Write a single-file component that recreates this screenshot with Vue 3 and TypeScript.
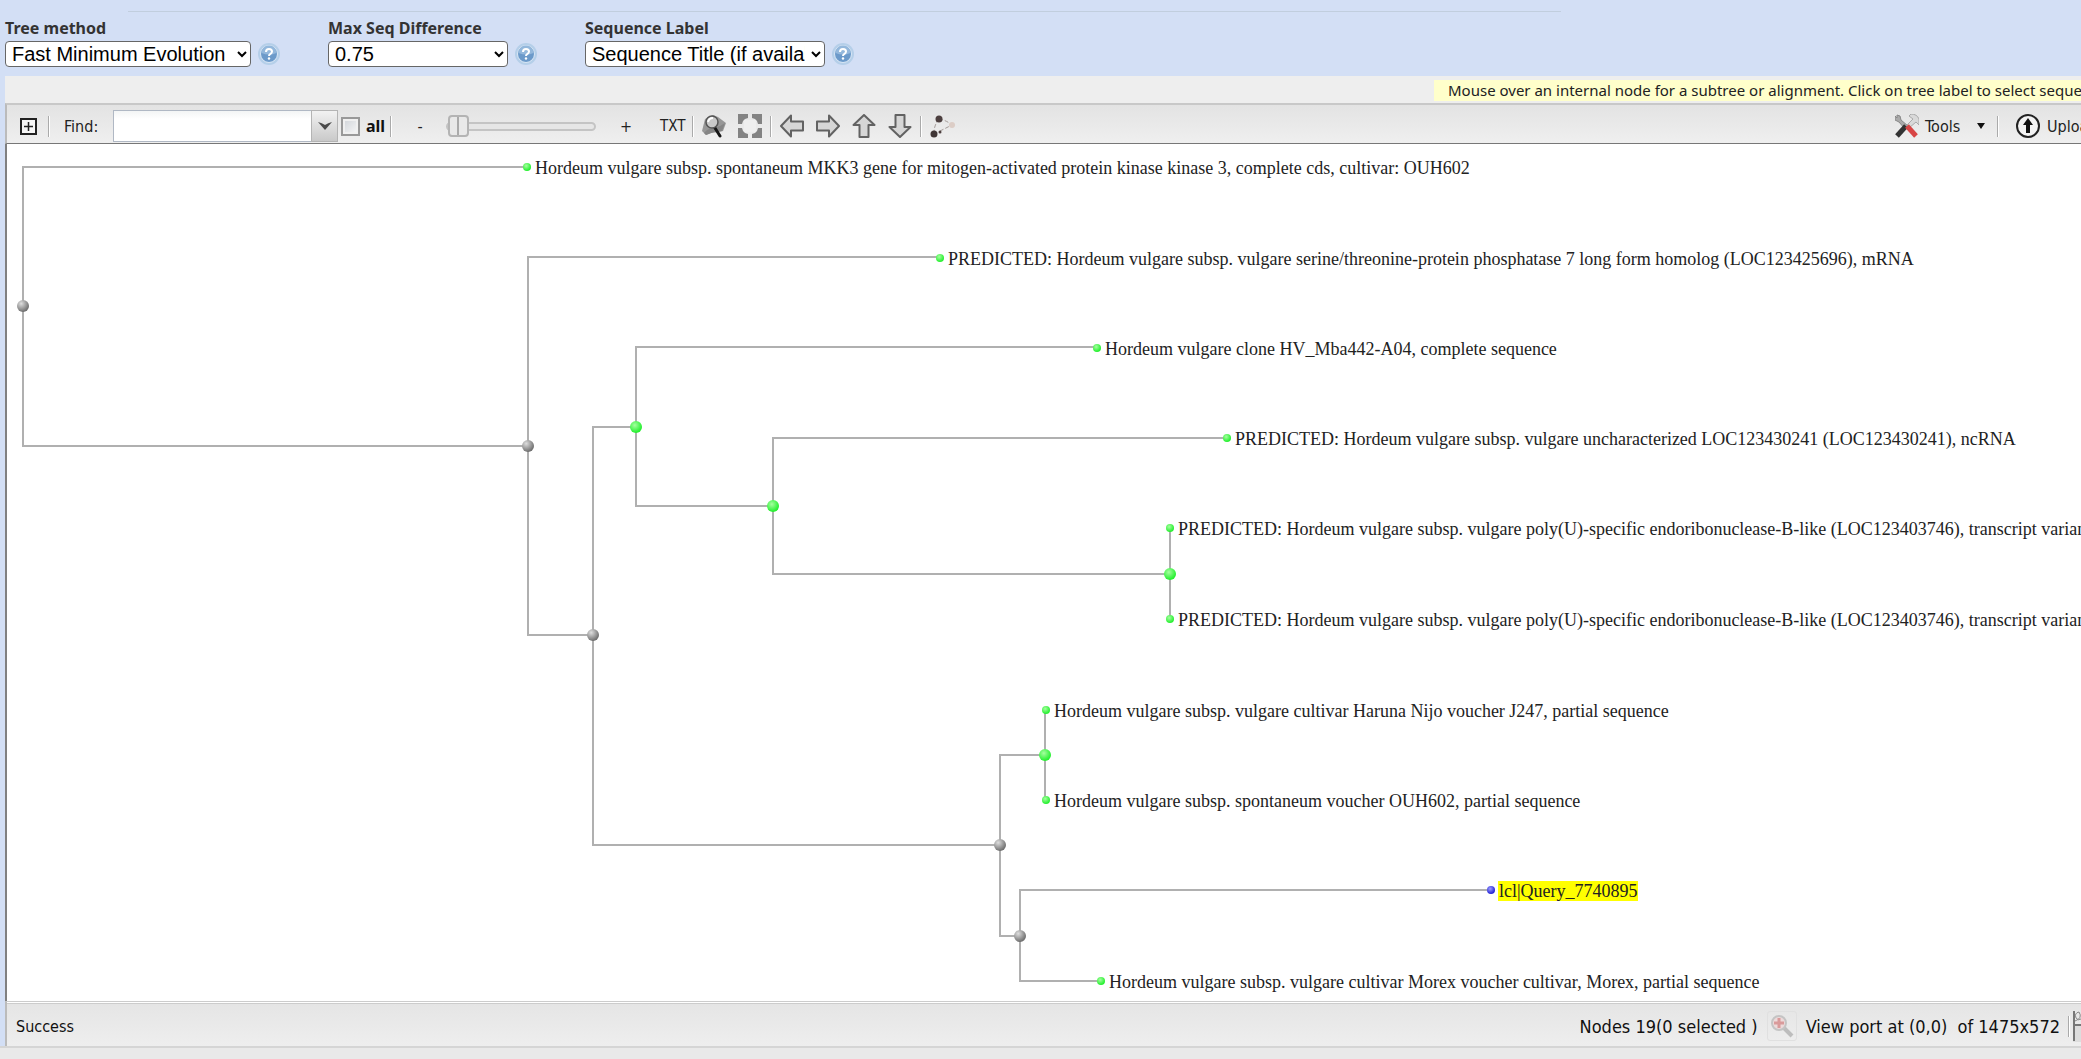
<script setup lang="ts">
import { computed, ref } from 'vue'

interface Picker {
  id: string
  label: string
  options: string[]
}

interface Branch {
  x: number
  y: number
  color: 'gray' | 'green'
  top: { x: number; y: number }
  bottom: { x: number; y: number }
}

interface Leaf {
  x: number
  y: number
  color: 'green' | 'blue'
  label: string
}

const pickers: Picker[] = [
  { id: 'method', label: 'Tree method', options: ['Fast Minimum Evolution', 'Neighbor Joining'] },
  { id: 'difference', label: 'Max Seq Difference', options: ['0.75', '0.85'] },
  { id: 'sequence', label: 'Sequence Label', options: ['Sequence Title (if available)', 'Taxonomic Name'] },
]

const arrows = [
  { name: 'Pan left', turn: 0 },
  { name: 'Pan right', turn: 180 },
  { name: 'Pan up', turn: 90 },
  { name: 'Pan down', turn: 270 },
]

const find = ref('')
const all = ref(false)
const zoom = ref(0)
const viewport = 'View port at (0,0)\u00a0 of 1475x572'

const branches: Branch[] = [
  { x: 16, y: 162, color: 'gray', top: { x: 520, y: 23 }, bottom: { x: 521, y: 302 } },
  { x: 521, y: 302, color: 'gray', top: { x: 933, y: 113 }, bottom: { x: 586, y: 491 } },
  { x: 586, y: 491, color: 'gray', top: { x: 629, y: 283 }, bottom: { x: 993, y: 701 } },
  { x: 629, y: 283, color: 'green', top: { x: 1090, y: 203 }, bottom: { x: 766, y: 362 } },
  { x: 766, y: 362, color: 'green', top: { x: 1220, y: 294 }, bottom: { x: 1163, y: 430 } },
  { x: 1163, y: 430, color: 'green', top: { x: 1163, y: 384 }, bottom: { x: 1163, y: 476 } },
  { x: 993, y: 701, color: 'gray', top: { x: 1038, y: 611 }, bottom: { x: 1013, y: 792 } },
  { x: 1038, y: 611, color: 'green', top: { x: 1038, y: 566 }, bottom: { x: 1038, y: 656 } },
  { x: 1013, y: 792, color: 'gray', top: { x: 1484, y: 746 }, bottom: { x: 1094, y: 837 } },
]

const leaves: Leaf[] = [
  { x: 520, y: 23, color: 'green', label: 'Hordeum vulgare subsp. spontaneum MKK3 gene for mitogen-activated protein kinase kinase 3, complete cds, cultivar: OUH602' },
  { x: 933, y: 114, color: 'green', label: 'PREDICTED: Hordeum vulgare subsp. vulgare serine/threonine-protein phosphatase 7 long form homolog (LOC123425696), mRNA' },
  { x: 1090, y: 204, color: 'green', label: 'Hordeum vulgare clone HV_Mba442-A04, complete sequence' },
  { x: 1220, y: 294, color: 'green', label: 'PREDICTED: Hordeum vulgare subsp. vulgare uncharacterized LOC123430241 (LOC123430241), ncRNA' },
  { x: 1163, y: 384, color: 'green', label: 'PREDICTED: Hordeum vulgare subsp. vulgare poly(U)-specific endoribonuclease-B-like (LOC123403746), transcript variant' },
  { x: 1163, y: 475, color: 'green', label: 'PREDICTED: Hordeum vulgare subsp. vulgare poly(U)-specific endoribonuclease-B-like (LOC123403746), transcript variant' },
  { x: 1039, y: 566, color: 'green', label: 'Hordeum vulgare subsp. vulgare cultivar Haruna Nijo voucher J247, partial sequence' },
  { x: 1039, y: 656, color: 'green', label: 'Hordeum vulgare subsp. spontaneum voucher OUH602, partial sequence' },
  { x: 1484, y: 746, color: 'blue', label: 'lcl|Query_7740895' },
  { x: 1094, y: 837, color: 'green', label: 'Hordeum vulgare subsp. vulgare cultivar Morex voucher cultivar, Morex, partial sequence' },
]

const edges = computed(() =>
  branches.map((b) => `M${b.top.x} ${b.top.y}H${b.x}V${b.bottom.y}H${b.bottom.x}`).join(''),
)
</script>

<template>
  <div class="page">
    <header class="options">
      <div class="rule"></div>
      <div v-for="p in pickers" :key="p.id" class="picker" :class="p.id">
        <label :for="p.id">{{ p.label }}</label>
        <div class="picker-row">
          <select :id="p.id">
            <option v-for="o in p.options" :key="o">{{ o }}</option>
          </select>
          <button class="help" type="button" :aria-label="'Help: ' + p.label">
            <svg width="22" height="22" viewBox="0 0 22 22">
              <circle cx="11" cy="11" r="11" fill="#b5cfe9" />
              <circle cx="11" cy="11" r="8.500" fill="#6c9aca" stroke="#dbe8f6" />
              <path d="M3.500 10a7.500 7.500 0 0 1 15 0q-7 3-15 0z" fill="#94b8dc" />
              <path d="M8 9q0-3 3-3t3 2.500q0 1.500-1.500 2.300T11 13" fill="none" stroke="#fff" stroke-width="2" />
              <circle cx="11" cy="15.500" r="1.200" fill="#fff" />
            </svg>
          </button>
        </div>
      </div>
    </header>

    <main class="viewer">
      <div class="notice-row">
        <p class="notice">Mouse over an internal node for a subtree or alignment. Click on tree label to select sequence</p>
      </div>

      <div class="toolbar">
        <button type="button" class="expand" aria-label="Expand">
          <svg width="17" height="17" viewBox="0 0 17 17">
            <rect x="1" y="1" width="15" height="15" fill="#f6f6f6" stroke="#222" stroke-width="2" />
            <path d="M4 8.500H13M8.500 4V13" stroke="#222" stroke-width="1.500" />
          </svg>
        </button>
        <i class="sep"></i>
        <label for="find" class="find-label">Find:</label>
        <div class="combo">
          <input id="find" v-model="find" type="text" />
          <button type="button" aria-label="Find history">
            <svg width="14" height="8" viewBox="0 0 14 8"><path d="M0 0q4 1 7 3 3-2 7-3l-7 8z" fill="#4a4a4a" /></svg>
          </button>
        </div>
        <input id="all" v-model="all" type="checkbox" class="check" />
        <label for="all" class="all-label">all</label>
        <i class="sep"></i>
        <button type="button" class="step minus">-</button>
        <input v-model="zoom" type="range" min="0" max="100" class="slider" aria-label="Zoom" />
        <button type="button" class="step plus">+</button>
        <button type="button" class="txt">TXT</button>
        <i class="sep"></i>
        <div class="icons">
          <button type="button" aria-label="Search">
            <svg width="24" height="24" viewBox="0 0 24 24">
              <path d="M0 17L3 5 11 1l5 2 8 6-3 8-4 1-8 1-5 2z" fill="#979797" />
              <path d="M2 19q4-5 10-5 6-1 11-5l-3 8-8 1-8 3z" fill="#858585" />
              <path d="M13 14l5 8" stroke="#161616" stroke-width="3" stroke-linecap="round" />
              <circle cx="10" cy="8" r="6" fill="#c9c9c9" stroke="#555" stroke-width="1.500" />
              <path d="M6 8q1-4 5-4" fill="none" stroke="#fff" stroke-width="2" />
            </svg>
          </button>
          <button type="button" aria-label="Fit to window">
            <svg width="24" height="24" viewBox="0 0 24 24">
              <path d="M0 0h10v4l-3 1-2 2-1 3H0zM14 0h10v10h-4l-1-3-2-2-3-1zM0 14h4l1 3 2 2 3 1v4H0zM20 14h4v10H14v-4l3-1 2-2z" fill="#838383" />
              <path d="M6 6h12v12H6z" fill="#efefef" />
            </svg>
          </button>
        </div>
        <i class="sep"></i>
        <div class="icons">
          <button v-for="a in arrows" :key="a.name" type="button" :aria-label="a.name">
            <svg width="24" height="24" viewBox="0 0 24 24">
              <path
                :transform="`rotate(${a.turn} 12 12)`"
                d="M1 12L11 1.500V7.500H23V16.500H11V22.500z"
                fill="#d6d6d6"
                stroke="#626262"
                stroke-width="2"
                stroke-linejoin="round"
              />
            </svg>
          </button>
        </div>
        <i class="sep"></i>
        <button type="button" class="graph" aria-label="Layout">
          <svg width="26" height="24" viewBox="0 0 26 24">
            <path d="M9 5q7 1 13 6L10 17M9 5Q4 11 4 19" fill="none" stroke="#a39b98" stroke-dasharray="4 2" />
            <circle cx="9" cy="5" r="3.500" fill="#4c3f3f" />
            <circle cx="4" cy="20" r="3.500" fill="#403636" />
            <circle cx="10" cy="18" r="1.500" fill="#4c3f3f" />
            <circle cx="22" cy="11" r="3" fill="#dccdc6" />
          </svg>
        </button>

        <div class="right">
          <button type="button" class="tools">
            <svg width="24" height="24" viewBox="0 0 24 24">
              <path d="M2 1l3 1 1 4 7 6-3 3-6-7-4-2V2l2 2z" fill="#aaa" stroke="#888" />
              <path d="M12 11l6-6-4-3 2-2q6 0 8 5v6l-3-3-7 6z" fill="#d9d9d9" stroke="#aaa" />
              <path d="M2 22l9-10" stroke="#333" stroke-width="5" />
              <path d="M12 12l9 10" stroke="#d84545" stroke-width="5" />
            </svg>
            <span>Tools</span>
            <svg class="caret" width="8" height="6" viewBox="0 0 8 6"><path d="M0 0h8L4 6z" fill="#111" /></svg>
          </button>
          <i class="sep"></i>
          <button type="button" class="upload">
            <svg width="26" height="24" viewBox="0 0 26 24">
              <circle cx="13" cy="12" r="11" fill="#f3f3f3" stroke="#222" stroke-width="2" />
              <path d="M13 4l5 7h-3v8h-4v-8H8z" fill="#111" />
            </svg>
            <span>Upload</span>
          </button>
        </div>
      </div>

      <svg class="tree" width="100%" height="857" role="img" aria-label="Distance tree">
        <defs>
          <radialGradient id="gray" cx="35%" cy="30%" r="70%">
            <stop offset="0" stop-color="#dedede" /><stop offset="1" stop-color="#6e6e6e" />
          </radialGradient>
          <radialGradient id="green" cx="40%" cy="35%" r="60%">
            <stop offset="0" stop-color="#a6ffa0" /><stop offset="1" stop-color="#28f032" />
          </radialGradient>
          <radialGradient id="blue" cx="40%" cy="35%" r="60%">
            <stop offset="0" stop-color="#9c9cff" /><stop offset="1" stop-color="#2626d8" />
          </radialGradient>
        </defs>
        <path :d="edges" class="edges" />
        <circle v-for="b in branches" :key="b.x + '-' + b.y" :cx="b.x" :cy="b.y" r="6" :fill="`url(#${b.color})`" />
        <rect class="mark" x="1491" y="737" width="140" height="20" />
        <g v-for="l in leaves" :key="l.y">
          <circle :cx="l.x" :cy="l.y" r="4" :fill="`url(#${l.color})`" />
          <text :x="l.x + 8" :y="l.y + 7">{{ l.label }}</text>
        </g>
      </svg>

      <footer class="status">
        <span>Success</span>
        <div class="status-right">
          <span>Nodes 19(0 selected )</span>
          <button type="button" class="locate" aria-label="Zoom to selection" disabled>
            <svg width="24" height="24" viewBox="0 0 24 24">
              <path d="M14 14l8 8" stroke="#bdbdbd" stroke-width="4" />
              <circle cx="9" cy="9" r="7" fill="#eddada" stroke="#c4c4c4" stroke-width="2" />
              <path d="M4 9h10M9 4v10" stroke="#d99a9a" stroke-width="3" />
            </svg>
          </button>
          <span class="port">{{ viewport }}</span>
          <i class="sep"></i>
          <svg class="edge-icon" width="8" height="32" viewBox="0 0 8 32">
            <path d="M0 15h8v17H0z" fill="#ddd" />
            <path d="M1 1V31M1 15h7" stroke="#777" stroke-width="2" />
            <path d="M2 11q8-3 4-9-5 1-3 6 2 3 5 1" fill="none" stroke="#888" />
          </svg>
        </div>
      </footer>
    </main>
  </div>
</template>

<style>
body {
  margin: 0;
  background: #e9e9e9;
}
</style>

<style scoped>
.page {
  overflow: hidden;
  border-bottom: 2px solid #d5d5d5;
  background: #d3dff5;
  font-family: 'DejaVu Sans Condensed', 'DejaVu Sans', sans-serif;
  font-stretch: condensed;
  font-size: 16px;
  color: #222;
}
button {
  padding: 0;
  border: 0;
  background: none;
  font: inherit;
  color: inherit;
  display: flex;
  align-items: center;
}
svg {
  display: block;
  flex: none;
}
.options {
  position: relative;
  display: flex;
  height: 76px;
  padding-left: 5px;
  box-sizing: border-box;
}
.rule {
  position: absolute;
  top: 11px;
  left: 128px;
  right: 25%;
  height: 1px;
  background: #c1cede;
}
.picker {
  padding-top: 17px;
}
.picker label {
  display: block;
  height: 24px;
  line-height: 22px;
  font-family: 'Noto Sans', sans-serif;
  font-stretch: normal;
  font-weight: 700;
  font-size: 16px;
  color: #333;
}
.picker-row {
  display: flex;
  align-items: center;
}
.picker select {
  height: 26px;
  padding: 0 3px 0 2px;
  border: 1px solid #666;
  border-radius: 4px;
  background: #fff;
  font-family: 'Liberation Sans', sans-serif;
  font-size: 20px;
  color: #000;
}
.method select {
  width: 246px;
}
.difference select {
  width: 180px;
}
.sequence select {
  width: 240px;
}
.help {
  margin: 0 48px 0 7px;
}
.viewer {
  margin-left: 5px;
}
.notice-row {
  display: flex;
  justify-content: flex-end;
  height: 27px;
  padding-top: 4px;
  box-sizing: border-box;
  background: #eee;
}
.notice {
  width: 633px;
  height: 21px;
  margin: 0;
  padding-left: 14px;
  overflow: hidden;
  background: #ffffcb;
  line-height: 20px;
  font-family: 'Noto Sans', sans-serif;
  font-stretch: normal;
  font-size: 15px;
  white-space: nowrap;
}
.toolbar {
  display: flex;
  align-items: center;
  height: 41px;
  padding: 4px 0 0 13px;
  box-sizing: border-box;
  border-top: 2px solid #c8c8c8;
  border-bottom: 1px solid #777;
  border-left: 2px solid #bbb;
  background: linear-gradient(#e3e3e3, #efefef);
}
.sep {
  flex: none;
  width: 1px;
  height: 21px;
  background: #aaa;
  border-right: 1px solid #fff;
}
.expand {
  margin-right: 11px;
}
.find-label {
  width: 49px;
  margin-left: 14px;
}
.combo {
  display: flex;
  height: 32px;
}
.combo input {
  width: 198px;
  padding: 0 4px;
  box-sizing: border-box;
  border: 1px solid #b0b8c4;
  border-right: 0;
  background: linear-gradient(#f3f5f5, #fff 8px);
  font: inherit;
}
.combo button {
  width: 27px;
  justify-content: center;
  border: 1px solid #b4b4b4;
  background: linear-gradient(#f2f2f2, #c9c9c9);
}
.check {
  appearance: none;
  width: 19px;
  height: 19px;
  margin: 0 6px 0 3px;
  border: 2px solid #999;
  background: linear-gradient(135deg, #cfd3d8, #f8f8f8);
  box-shadow: inset 0 0 0 2px #f0f0f0;
}
.all-label {
  width: 24px;
  font-family: 'Noto Sans', sans-serif;
  font-stretch: normal;
  font-weight: 700;
  font-size: 16px;
  line-height: 20px;
  color: #111;
}
.step {
  width: 20px;
  justify-content: center;
}
.minus {
  margin: 0 16px 0 18px;
}
.plus {
  margin: 0 24px 0 20px;
}
.slider {
  appearance: none;
  width: 150px;
  height: 22px;
  margin: 0;
  background: transparent;
}
.slider::-webkit-slider-runnable-track {
  height: 9px;
  border: 2px solid #c4c4c4;
  border-radius: 5px;
  box-sizing: border-box;
  background: #e6e6e6;
}
.slider::-webkit-slider-thumb {
  appearance: none;
  width: 21px;
  height: 22px;
  margin-top: -9px;
  border: 2px solid #b4b4b4;
  border-radius: 4px;
  box-sizing: border-box;
  background: linear-gradient(90deg, transparent 7px, #aaa 7px, #aaa 9px, transparent 9px), #e9e9e9;
}
.txt {
  width: 32px;
  font-size: 15px;
}
.icons {
  display: flex;
  gap: 12px;
  margin: 0 8px;
}
.graph {
  margin-left: 8px;
}
.right {
  display: flex;
  align-items: center;
  width: 186px;
  margin-left: auto;
  overflow: hidden;
}
.tools {
  flex: none;
  width: 102px;
  gap: 6px;
}
.caret {
  margin-left: 11px;
}
.upload {
  margin-left: 16px;
  gap: 6px;
}
.tree {
  width: 100%;
  box-sizing: border-box;
  border-left: 2px solid #808080;
  background: #fff;
}
.tree text {
  font-family: 'Liberation Serif', serif;
  font-stretch: normal;
  font-size: 18px;
  fill: #222;
}
.edges {
  fill: none;
  stroke: #b0b0b0;
  stroke-width: 2px;
}
.mark {
  fill: #ff0;
}
.status {
  display: flex;
  align-items: center;
  justify-content: space-between;
  height: 45px;
  padding: 4px 0 0 9px;
  box-sizing: border-box;
  border-top: 1px solid #ccc;
  border-left: 2px solid #bbb;
  background: linear-gradient(#fff 1px, #ccc 1px, #ccc 2px, #e5e5e5 2px, #eee);
  color: #111;
}
.status-right {
  display: flex;
  align-items: center;
  font-size: 18px;
}
.locate {
  width: 30px;
  height: 30px;
  margin: 0 9px;
  justify-content: center;
  border: 1px solid #e0e0e0;
  border-radius: 3px;
}
.port {
  margin-right: 8px;
  white-space: pre;
}
.edge-icon {
  margin-left: 3px;
}
</style>
